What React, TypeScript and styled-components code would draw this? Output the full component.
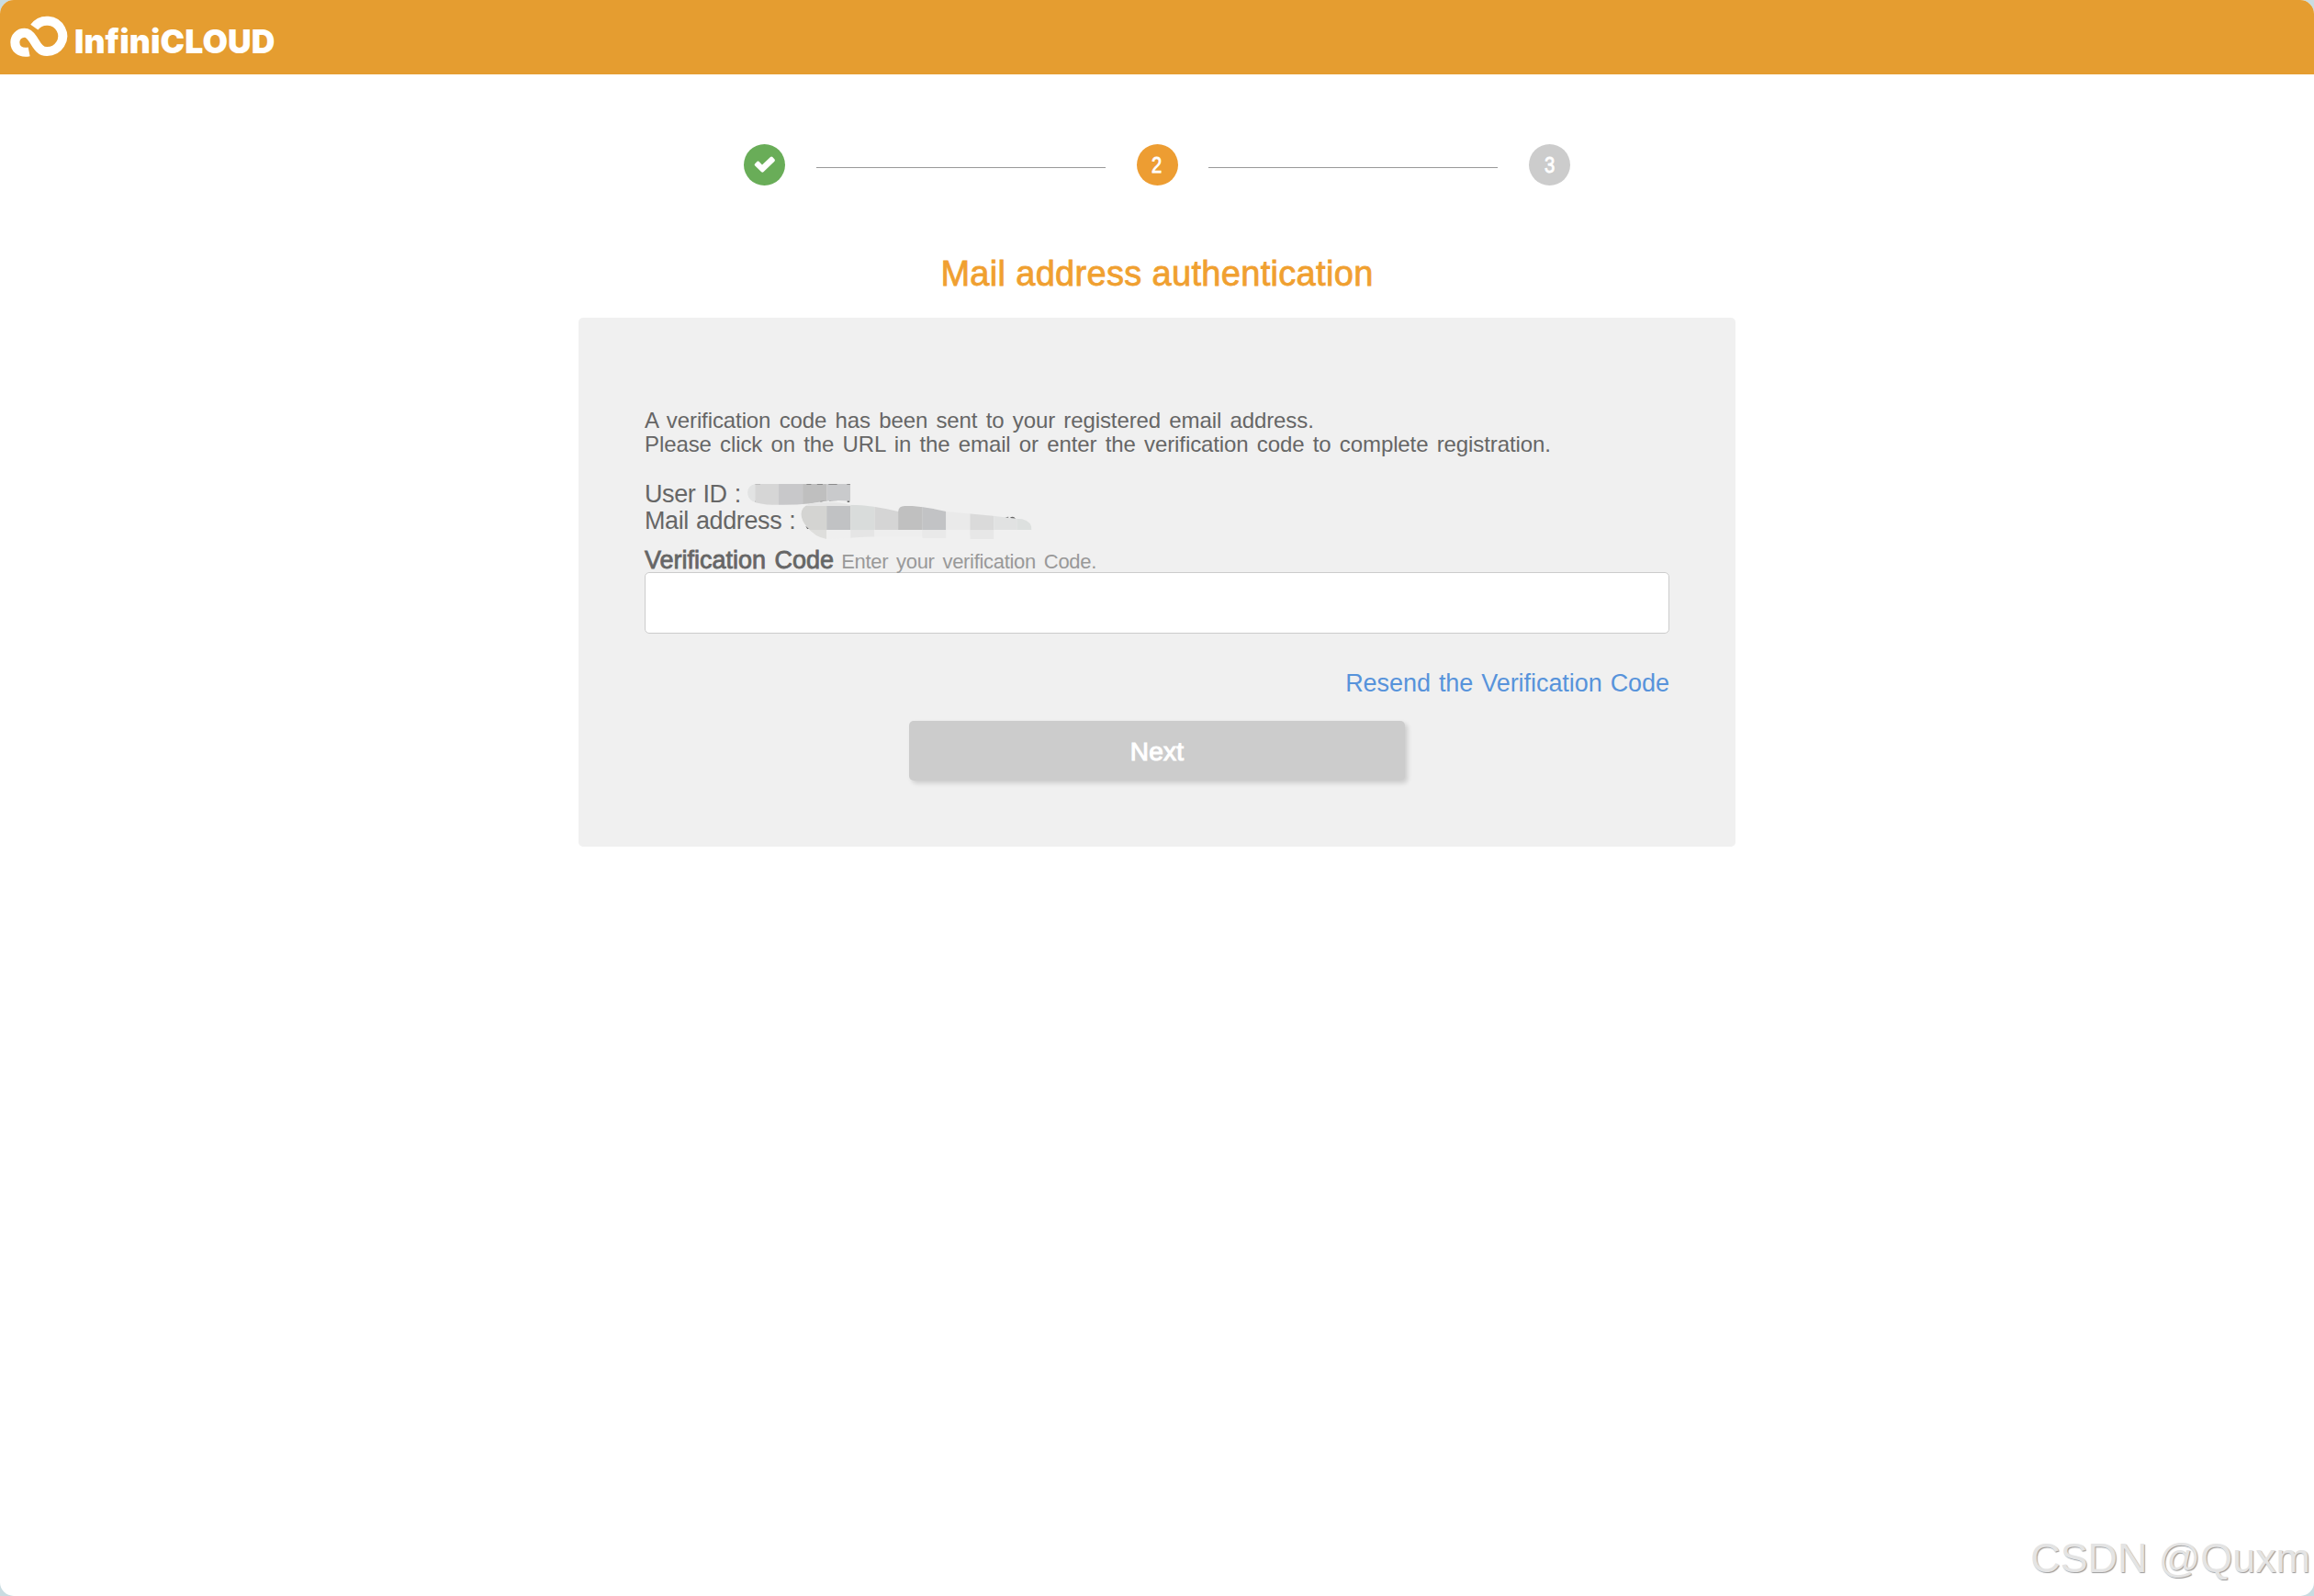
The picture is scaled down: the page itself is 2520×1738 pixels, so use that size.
import React from "react";
import styled, { createGlobalStyle } from "styled-components";

const GlobalStyle = createGlobalStyle`
  * {
    box-sizing: border-box;
  }
  body {
    margin: 0;
    background: #c9dce1;
    font-family: "Liberation Sans", Arial, sans-serif;
    color: #666;
  }
`;

const Page = styled.div`
  position: relative;
  height: 1738px;
  background: #fff;
  border-radius: 15px;
  overflow: hidden;
`;

const Header = styled.header`
  display: flex;
  align-items: flex-start;
  height: 81px;
  padding: 17px 0 0 10px;
  background: #e59d30;
`;

const Brand = styled.span`
  margin: 8px 0 0 6px;
  font-family: Inter, sans-serif;
  font-size: 35.5px;
  font-weight: 900;
  line-height: 42px;
  letter-spacing: 0.1px;
  color: #fff;
`;

const Main = styled.main`
  display: flex;
  flex-direction: column;
  align-items: center;
  padding-top: 76px;
`;

const Steps = styled.div`
  display: flex;
  align-items: center;
  justify-content: space-between;
  width: 900px;
  height: 45px;
`;

const Step = styled.div<{ $color: string }>`
  display: flex;
  align-items: center;
  justify-content: center;
  width: 45px;
  height: 45px;
  border-radius: 50%;
  background: ${(p) => p.$color};
  color: #fff;
  font-size: 24px;
  -webkit-text-stroke: 0.9px #fff;
`;

const Digit = styled.span`
  transform: scaleX(0.84);
`;

const Connector = styled.div`
  width: 315px;
  height: 1px;
  margin-top: 6px;
  background: #999;
`;

const Title = styled.h1`
  margin: 73px 0 0;
  font-size: 38px;
  font-weight: 400;
  line-height: 46px;
  letter-spacing: 0.32px;
  color: #f0a030;
  -webkit-text-stroke: 0.8px #f0a030;
`;

const Card = styled.section`
  width: 1260px;
  height: 576px;
  margin-top: 25px;
  padding: 99px 72px 0;
  background: #f0f0f0;
  border-radius: 5px;
`;

const Message = styled.p`
  margin: 0;
  font-size: 24px;
  line-height: 26px;
  letter-spacing: -0.1px;
  word-spacing: 2.7px;
  white-space: nowrap;
`;

const Details = styled.div`
  position: relative;
  margin-top: 27px;
  font-size: 27px;
  line-height: 29px;
  letter-spacing: -0.4px;
  word-spacing: 1px;
`;

const Masked = styled.svg`
  position: absolute;
  left: 111px;
  top: 1px;
`;

const Label = styled.label`
  display: flex;
  align-items: baseline;
  height: 27px;
  margin-top: 14px;
  font-size: 27px;
  line-height: 28px;
  letter-spacing: 0;
  word-spacing: 2px;
  -webkit-text-stroke: 0.8px #666;
`;

const Hint = styled.span`
  margin-left: 8px;
  font-size: 22px;
  letter-spacing: -0.3px;
  word-spacing: 3px;
  color: #999;
  -webkit-text-stroke: 0;
`;

const CodeInput = styled.input`
  display: block;
  width: 100%;
  height: 67px;
  padding: 0 16px;
  border: 1px solid #ccc;
  border-radius: 5px;
  background: #fff;
  font-size: 27px;
`;

const Resend = styled.a`
  display: block;
  margin-top: 39px;
  text-align: right;
  font-size: 27px;
  line-height: 30px;
  letter-spacing: -0.05px;
  word-spacing: 1.5px;
  color: #5793db;
`;

const NextButton = styled.button`
  display: block;
  width: 540px;
  height: 65px;
  margin: 26px auto 0;
  padding: 2px 0 0;
  border: 0;
  border-radius: 5px;
  background: #ccc;
  box-shadow: 3px 3px 5px rgba(0, 0, 0, 0.15);
  color: #fff;
  font-family: inherit;
  font-size: 28px;
  letter-spacing: 0.2px;
  -webkit-text-stroke: 1.1px #fff;
`;

const Watermark = styled.div`
  position: absolute;
  right: 4px;
  bottom: 15px;
  font-size: 45px;
  line-height: 52px;
  letter-spacing: -0.1px;
  color: #e4e4e4;
  text-shadow: 1px 1px 1px #999;
`;

const Logo = () => (
  <svg width="65" height="46" viewBox="30 51 195 138" fill="none">
    <path
      d="M112 89A51 50 0 1 1 153 168C130 168 121 148 108 128C99 114 92 107 80 107A31 31 0 0 0 49 138C49 158 64 175 95 169"
      stroke="#fff"
      strokeWidth="30"
    />
  </svg>
);

const Check = () => (
  <svg width="24" height="20" viewBox="0 0 24 20">
    <path
      d="M1 8.5 3.6 5.8Q4.5 5 5.4 5.8L9 9.4 18 1Q19.2 0 20.3 1L22.6 3.4Q23.4 4.6 22.4 5.7L10.4 17.3Q9.3 18.2 8.2 17.3L1 10.3Q.2 9.4 1 8.5Z"
      fill="#fff"
    />
  </svg>
);

// brushed-over account values
const MaskedValues = () => (
  <Masked width="312" height="64" viewBox="540 285 873 192" preserveAspectRatio="none">
    <clipPath id="user">
      <path d="M566 291H857V347Q800 340 735 355Q680 361 620 359Q580 358 558 347Q543 338 543 318Q545 296 566 291Z" />
    </clipPath>
    <clipPath id="mail">
      <path d="M706 390Q708 364 735 355Q800 344 857 359Q925 360 1002 381Q1003 363 1022 363H1045Q1090 366 1148 381L1290 395Q1340 402 1380 406Q1409 414 1409 441H1294V471H1221V461L1148 468H1075V463Q930 460 857 467L784 471Q748 465 722 429Q708 410 706 390Z" />
    </clipPath>
    <g fill="#666">
      <path d="M566 346h16v4h-16zM847 342h7v9h-7zM720 428l14 10h-9zM1328 400l10-2v6zM1343 401q10-6 17 3h-14z" />
    </g>
    <g clipPath="url(#user)">
      <path fill="#e2e3e3" d="M540 290h26v70h-26z" />
      <path fill="#d6d6d6" d="M566 290h72v70h-72z" />
      <path fill="#c8c8ca" d="M638 290h73v70h-73z" />
      <path fill="#bfbfbf" d="M711 290h74v70h-74z" />
      <path fill="#c9cacc" d="M785 290h72v70h-72z" />
      <path fill="#777" d="M566 290h16v2h-16zM723 290h14v3h-14zM755 290h17v3h-17zM790 290h26v3h-26zM846 290h10v3h-10zM765 347h20v4h-20zM792 345h26v4h-26z" />
    </g>
    <g clipPath="url(#mail)">
      <path fill="#e5e5e5" d="M700 345h157v18h-157z" />
      <path fill="#d4d4d2" d="M700 363h84v78h-84z" />
      <path fill="#c1c2c4" d="M784 363h73v78h-73z" />
      <path fill="#d9dcdb" d="M857 359h73v82h-73z" />
      <path fill="#d5d5d5" d="M930 359h72v82h-72z" />
      <path fill="#c0c0c0" d="M1002 359h73v82h-73z" />
      <path fill="#c2c3c5" d="M1075 359h73v82h-73z" />
      <path fill="#eaeaea" d="M1148 370h73v71h-73z" />
      <path fill="#dadada" d="M1221 370h73v71h-73z" />
      <path fill="#e1e2e2" d="M1294 370h70v71h-70z" />
      <path fill="#dde0df" d="M1364 370h50v71h-50z" />
      <path fill="#dededc" d="M700 441h84v35h-84z" />
      <path fill="#efefef" d="M784 441h73v35h-73z" />
      <path fill="#e5e5e5" d="M857 441h73v35h-73z" />
      <path fill="#eee" d="M930 441h145v35h-145z" />
      <path fill="#e9e9e9" d="M1075 441h73v35h-73z" />
      <path fill="#e7e7e7" d="M1221 441h73v35h-73z" />
    </g>
  </Masked>
);

const App = () => (
  <>
    <GlobalStyle />
    <Page>
      <Header>
        <Logo />
        <Brand>InfiniCLOUD</Brand>
      </Header>
      <Main>
        <Steps>
          <Step $color="#69ad58">
            <Check />
          </Step>
          <Connector />
          <Step $color="#ed9d32">
            <Digit>2</Digit>
          </Step>
          <Connector />
          <Step $color="#ccc">
            <Digit>3</Digit>
          </Step>
        </Steps>
        <Title>Mail address authentication</Title>
        <Card>
          <Message>
            A verification code has been sent to your registered email address.
            <br />
            Please click on the URL in the email or enter the verification code to complete registration.
          </Message>
          <Details>
            <div>User ID :</div>
            <div>Mail address :</div>
            <MaskedValues />
          </Details>
          <Label htmlFor="code">
            Verification Code
            <Hint>Enter your verification Code.</Hint>
          </Label>
          <CodeInput id="code" />
          <Resend>Resend the Verification Code</Resend>
          <NextButton>Next</NextButton>
        </Card>
      </Main>
      <Watermark>CSDN @Quxm</Watermark>
    </Page>
  </>
);

export default App;
